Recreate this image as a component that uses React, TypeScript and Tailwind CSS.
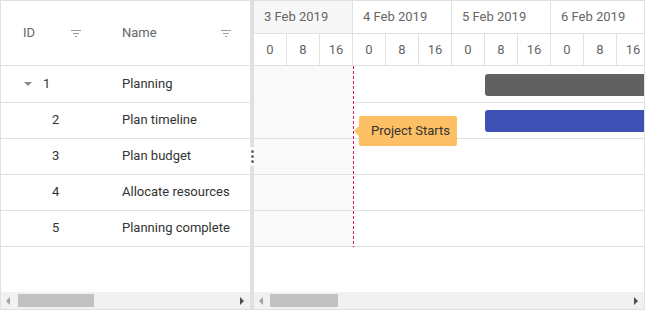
import React from 'react';

const rows = [
    { id: 1, name: 'Planning', parent: true },
    { id: 2, name: 'Plan timeline', parent: false },
    { id: 3, name: 'Plan budget', parent: false },
    { id: 4, name: 'Allocate resources', parent: false },
    { id: 5, name: 'Planning complete', parent: false },
];

const days = ['3 Feb 2019', '4 Feb 2019', '5 Feb 2019', '6 Feb 2019'];

const FilterIcon = () => (
    <svg width="10" height="7" viewBox="0 0 10 7" className="shrink-0">
        <rect x="0" y="0" width="10" height="1" fill="#9e9e9e" />
        <rect x="2" y="3" width="6" height="1" fill="#9e9e9e" />
        <rect x="4" y="6" width="2" height="1" fill="#9e9e9e" />
    </svg>
);

const ScrollBar = ({ thumbLeft, thumbWidth }: { thumbLeft: number; thumbWidth: number }) => (
    <div className="h-[17px] bg-[#f1f1f1] relative shrink-0">
        <svg width="4" height="8" viewBox="0 0 4 8" className="absolute left-[5px] top-[5px]">
            <path d="M4 0 L0 4 L4 8 Z" fill="#a3a3a3" />
        </svg>
        <div className="absolute top-[2px] h-[13px] bg-[#c1c1c1]" style={{ left: thumbLeft, width: thumbWidth }} />
        <svg width="4" height="8" viewBox="0 0 4 8" className="absolute right-[6px] top-[5px]">
            <path d="M0 0 L4 4 L0 8 Z" fill="#505050" />
        </svg>
    </div>
);

export default function App() {
    return (
        <div className="w-[645px] h-[310px] border border-[#e0e0e0] flex bg-white font-['Roboto',sans-serif] text-[13px]">
            {/* Grid */}
            <div className="w-[249px] flex flex-col shrink-0">
                <div className="h-[65px] border-b border-[#e0e0e0] flex items-center text-[#666]">
                    <div className="w-[100px] flex items-center justify-between pl-[22px] pr-[20px]">
                        <span>ID</span>
                        <FilterIcon />
                    </div>
                    <div className="flex-1 flex items-center justify-between pl-[21px] pr-[19px]">
                        <span>Name</span>
                        <FilterIcon />
                    </div>
                </div>
                <div className="pt-[1px]">
                    {rows.map((r) => (
                        <div key={r.id} className="h-[36px] pb-[2px] border-b border-[#e0e0e0] flex items-center text-[#333]">
                            <div className="w-[100px] flex items-center">
                                {r.parent ? (
                                    <>
                                        <svg width="8" height="4" viewBox="0 0 8 4" className="ml-[23px]">
                                            <path d="M0 0 L8 0 L4 4 Z" fill="#8a8a8a" />
                                        </svg>
                                        <span className="ml-[11px]">{r.id}</span>
                                    </>
                                ) : (
                                    <span className="ml-[51px]">{r.id}</span>
                                )}
                            </div>
                            <div className="flex-1 pl-[21px]">{r.name}</div>
                        </div>
                    ))}
                </div>
                <div className="flex-1" />
                <ScrollBar thumbLeft={17} thumbWidth={76} />
            </div>

            {/* Splitter */}
            <div className="w-[4px] bg-[#e0e0e0] relative shrink-0">
                <div className="absolute left-0 top-[146px] w-[4px] h-[19px] bg-white flex items-center justify-center">
                    <svg width="3" height="13" viewBox="0 0 3 13">
                        <circle cx="1.5" cy="1.5" r="1.5" fill="#5c6b80" />
                        <circle cx="1.5" cy="6.5" r="1.5" fill="#5c6b80" />
                        <circle cx="1.5" cy="11.5" r="1.5" fill="#5c6b80" />
                    </svg>
                </div>
            </div>

            {/* Chart */}
            <div className="flex-1 flex flex-col overflow-hidden">
                <div className="flex text-[#666] shrink-0">
                    {days.map((d, i) => (
                        <div key={d} className="w-[99px] shrink-0 flex flex-col">
                            <div
                                className={
                                    'h-[33px] border-b border-r border-[#e0e0e0] flex items-center pl-[10px] ' +
                                    (i === 0 ? 'bg-[#f7f7f7]' : 'bg-white')
                                }
                            >
                                {d}
                            </div>
                            <div className="h-[32px] border-b border-[#e0e0e0] flex">
                                {['0', '8', '16'].map((h) => (
                                    <div key={h} className="w-[33px] border-r border-[#e0e0e0] flex items-center justify-center">
                                        {h}
                                    </div>
                                ))}
                            </div>
                        </div>
                    ))}
                </div>
                <div className="relative pt-[1px]">
                    {rows.map((r, i) => (
                        <div key={r.id} className="h-[36px] border-b border-[#e0e0e0] flex">
                            <div className={(i === 0 ? 'h-[37px] -mt-[1px] ' : '') + 'w-[99px] bg-[#f9f9f9] shrink-0'} />
                        </div>
                    ))}
                    <div className="absolute left-[99px] top-0 bottom-0 w-px bg-[repeating-linear-gradient(to_bottom,#d81b60_0px,#d81b60_3px,transparent_3px,transparent_5px)]" />
                    <div className="absolute left-[231px] top-[8px] w-[200px] h-[22px] rounded-[3px] bg-[#616161]" />
                    <div className="absolute left-[231px] top-[44px] w-[200px] h-[22px] rounded-[3px] bg-[#3f51b5]" />
                    <div className="absolute left-[105px] top-[50px] h-[30px] w-[98px] rounded-[2px] bg-[#fdc064] flex items-center pl-[12px] text-[#333]">
                        <div className="absolute -left-[5px] top-[10px] w-0 h-0 border-y-[5px] border-y-transparent border-r-[5px] border-r-[#fdc064]" />
                        Project Starts
                    </div>
                </div>
                <div className="flex-1" />
                <ScrollBar thumbLeft={16} thumbWidth={68} />
            </div>
        </div>
    );
}
